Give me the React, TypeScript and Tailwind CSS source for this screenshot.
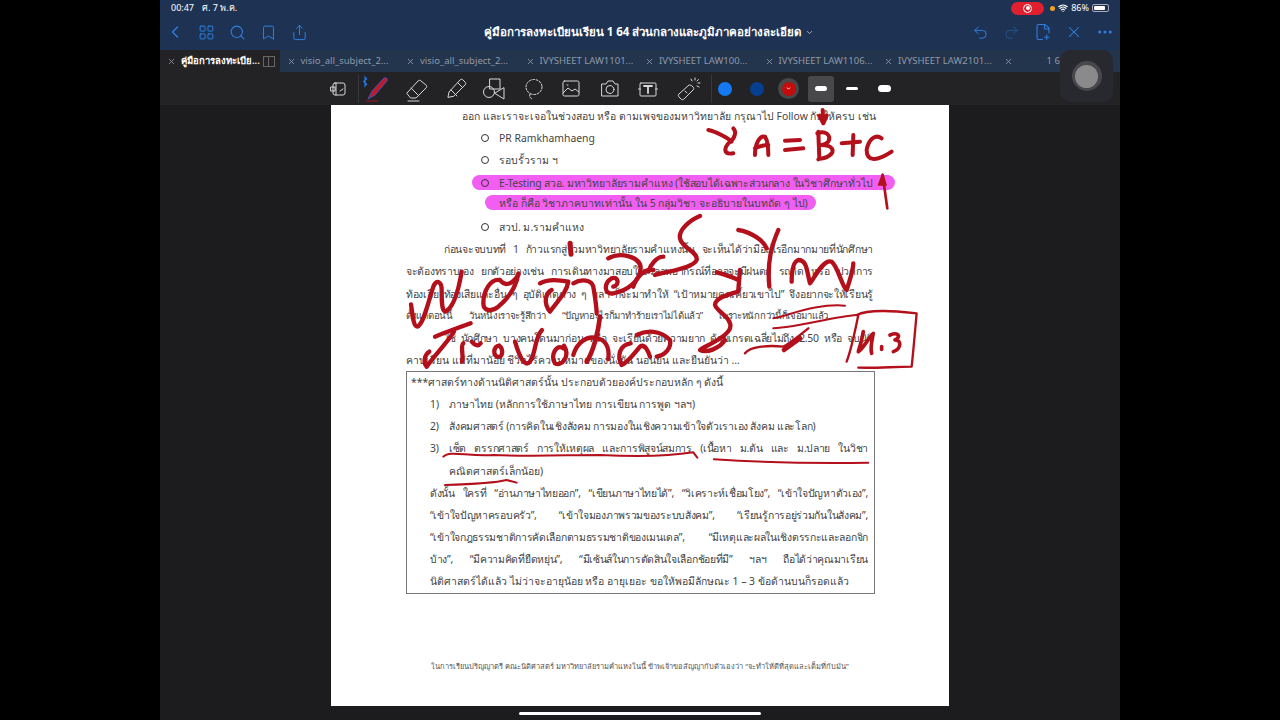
import React from "react";
import { ChevronLeft, ChevronDown, LayoutGrid, Search, Bookmark, Share, Undo2, Redo2, FilePlus2, X, Ellipsis, Wifi } from "lucide-react";

const tabs = ["คู่มือการลงทะเบีย...", "visio_all_subject_2...", "visio_all_subject_2...", "IVYSHEET LAW1101...", "IVYSHEET LAW100...", "IVYSHEET LAW1106...", "IVYSHEET LAW2101..."];

function Line({ ml = 0, w, j, className = "", children }: { ml?: number; w?: number; j?: boolean; className?: string; children: React.ReactNode }) {
  return (
    <div
      className={`h-[22.2px] leading-[22.2px] ${j ? "overflow-hidden tracking-[-0.3px] [text-align:justify] [text-align-last:justify]" : "whitespace-nowrap"} ${className}`}
      style={{ marginLeft: ml, width: w }}
    >
      {children}
    </div>
  );
}

function Num({ children }: { children: React.ReactNode }) {
  return <span className="inline-block w-[19px]">{children}</span>;
}

function Bullet({ children, hl }: { children: React.ReactNode; hl?: boolean }) {
  return (
    <div className="relative flex h-[22.2px] items-center">
      {hl && <span className="absolute left-[141px] top-[3px] h-[15px] w-[423px] rounded-full bg-[#f25ef2]" />}
      <span className="relative ml-[150px] mr-[10px] h-[8px] w-[8px] rounded-full border border-[#333]" />
      <span className={`relative whitespace-nowrap leading-[22.2px] ${hl ? "tracking-[-0.15px]" : ""}`}>{children}</span>
    </div>
  );
}

function ToolIcon({ children }: { children: React.ReactNode }) {
  return (
    <svg width={26} height={26} viewBox="0 0 26 26" fill="none" stroke="#d8d8d8" strokeWidth={1} strokeLinecap="round" strokeLinejoin="round">
      {children}
    </svg>
  );
}

function Toolbar() {
  return (
    <div className="flex h-[33px] items-center bg-[#232325] pl-[166px]">
      <div className="flex w-[26px] justify-center">
        <ToolIcon>
          <rect x="7" y="7" width="12" height="12" rx="2" />
          <path d="M10 7v12M5 11h4v4H5zM14 15l3-2" />
        </ToolIcon>
      </div>
      <div className="ml-[6px] h-[28px] w-px bg-[#38383a]" />
      <div className="ml-px w-[36px]">
        <svg width="36" height="30" viewBox="0 0 36 30" fill="none">
          <path d="M5 3l1.600 2-3 2.500 3 2.500-1.600 2V3z" fill="none" stroke="#1e78e6" strokeWidth="1.200" />
          <path d="M8 25l4-8L24 4c2-1 4 0 3 3L15 21z" fill="#c3172e" stroke="#3a55b0" strokeWidth="1" />
          <path d="M6 27h12" stroke="#a51424" strokeWidth="1" />
        </svg>
      </div>
      <div className="ml-[8px]">
        <ToolIcon>
          <path d="M3 17L14 5c1-1 2-1 3 0l5 4c1 1 1 2 0 3L12 22H7z" />
          <path d="M7 12l8 8M4 25h11" />
        </ToolIcon>
      </div>
      <div className="ml-[13px]">
        <ToolIcon>
          <path d="M5 21l1-5L17 4c1-1 2-1 3 0l2 2c1 1 1 2 0 3L11 20z" />
          <path d="M8 14l6 6M15 7l4 4" />
        </ToolIcon>
      </div>
      <div className="ml-[12px]">
        <ToolIcon>
          <rect x="9" y="3" width="10" height="10" />
          <circle cx="8" cy="16" r="5.500" />
          <path d="M23 12v11l-9-5.500z" />
        </ToolIcon>
      </div>
      <div className="ml-[13px]">
        <ToolIcon>
          <ellipse cx="14" cy="11" rx="8" ry="7.500" strokeDasharray="2 1.500" />
          <path d="M10 18c-1 2 0 4 2 5" strokeDasharray="2 1.500" />
        </ToolIcon>
      </div>
      <div className="ml-[12px]">
        <ToolIcon>
          <rect x="5" y="5" width="16" height="15" rx="1.500" />
          <path d="M5 17l5-5 4 3 3-2 4 3M9 9h1" />
        </ToolIcon>
      </div>
      <div className="ml-[13px]">
        <ToolIcon>
          <path d="M5 8h4l2-3h5l2 3h3v12H5z" />
          <circle cx="13" cy="13.500" r="4" />
        </ToolIcon>
      </div>
      <div className="ml-[12px]">
        <ToolIcon>
          <rect x="5" y="7" width="16" height="13" rx="1" />
          <path d="M9 10h8M13 10v7" strokeWidth="1.800" />
          <path d="M3.500 13h2M20.500 13h2" />
        </ToolIcon>
      </div>
      <div className="ml-[14px]">
        <ToolIcon>
          <path d="M4 18l10-9c1 0 2 0 3 1l1 1c1 1 1 2 0 3L9 23c-1 1-2 1-3 0l-2-2c-1-1-1-2 0-3z" />
          <path d="M10 15l2 2M20 2v2M25 7h-2M23.500 3.500l-1.500 1.500M16 3l1 2M24 11l-2-1" />
        </ToolIcon>
      </div>
      <div className="ml-[10px] h-[28px] w-px bg-[#38383a]" />
      <span className="ml-[6px] h-[14px] w-[14px] rounded-full bg-[#1479f2]" />
      <span className="ml-[18px] h-[14px] w-[14px] rounded-full bg-[#063f8f]" />
      <span className="ml-[14px] flex h-[21px] w-[21px] items-center justify-center rounded-full bg-[#48484a]">
        <span className="flex h-[14px] w-[14px] items-center justify-center rounded-full bg-[#c40c0c]">
          <ChevronDown size={5} strokeWidth={4} className="text-white" />
        </span>
      </span>
      <span className="ml-[9px] flex h-[26px] w-[26px] items-center justify-center rounded-[3px] bg-[#48484a]">
        <span className="h-[5px] w-[12px] rounded-full bg-white" />
      </span>
      <span className="ml-[12px] h-[3.500px] w-[12px] rounded-full bg-white" />
      <span className="ml-[20px] h-[7px] w-[13px] rounded-full bg-white" />
    </div>
  );
}

function Ink() {
  const common = { fill: "none", stroke: "#b3101c", strokeLinecap: "round" as const, strokeLinejoin: "round" as const };
  return (
    <svg className="pointer-events-none absolute left-0 top-0" width="1280" height="720" viewBox="0 0 1280 720">
      <g transform="translate(400,215) scale(0.3333)" {...common} strokeWidth="13">
        <path d="M33 268C38 300 40 335 52 335C70 330 85 260 100 215C110 190 125 200 125 225C125 260 125 285 135 290C160 280 175 230 185 170" />
        <path d="M300 195C270 190 250 230 250 265C250 290 275 290 295 275C330 245 350 210 355 175M300 195C315 215 335 210 355 180" />
        <path d="M420 205C445 190 480 195 505 200C500 235 470 260 450 290C430 265 435 235 455 225" />
        <path d="M520 205C545 190 575 195 580 215C585 245 590 275 590 295" />
        <path d="M510 85L513 118" strokeWidth="15" />
        <path d="M625 130C660 110 722 125 722 160C720 200 680 228 640 235C612 240 610 205 635 190C655 182 660 210 640 215" />
        <path d="M700 215C710 185 735 160 760 165" />
        <path d="M105 365C130 355 170 340 212 325" />
        <path d="M162 350C140 385 105 420 80 455C70 445 72 420 88 410" />
        <path d="M190 385C180 395 192 420 186 440M215 380C225 392 235 395 242 385" />
        <path d="M298 392C280 390 275 430 300 425C310 418 308 400 298 392" />
        <path d="M345 380C360 430 375 458 390 440C410 410 402 370 426 345" />
        <path d="M490 400C470 385 450 420 465 445C485 455 512 425 492 392" />
        <path d="M600 305C595 350 580 410 560 440" strokeWidth="14" />
        <path d="M520 420C530 385 560 360 590 370C612 372 630 392 625 432" />
        <path d="M692 385C660 390 650 420 665 450C680 445 700 420 720 395C735 385 745 410 750 425" />
      </g>
      <g transform="translate(650,215) scale(0.3333)" {...common} strokeWidth="13">
        <path d="M150 3C120 15 85 45 90 70C95 100 145 110 140 135C130 160 50 170 15 180" />
        <path d="M40 125C20 125 0 150 -5 170" />
        <path d="M200 172C230 180 255 190 265 195M270 165L265 225" />
        <path d="M265 45C300 50 340 75 350 100M385 45C370 80 350 130 358 215" />
        <path d="M425 200C425 165 430 140 445 135C470 135 470 165 480 205C490 195 520 130 545 140C565 155 575 215 590 225C600 195 610 165 610 145" />
        <path d="M265 230C230 240 195 250 195 270C200 290 250 310 240 340C230 370 150 400 150 405C170 415 210 400 225 375" />
        <path d="M60 375C30 345 -10 345 -40 360M60 375C65 400 45 420 20 425" />
        <path d="M370 310C420 300 500 265 585 272" strokeWidth="6" />
        <path d="M370 340C450 335 550 305 620 300" strokeWidth="6" />
        <path d="M285 415C300 395 350 390 400 395C420 385 450 360 475 340" strokeWidth="7" />
        <path d="M402 405L450 370" strokeWidth="14" />
        <path d="M620 300C660 280 750 290 800 295C795 350 790 410 785 455C730 455 680 460 625 458" strokeWidth="7" />
        <path d="M625 300C615 350 605 400 590 440" strokeWidth="7" />
        <path d="M640 350C635 380 625 410 625 410C640 400 655 370 670 355C665 380 660 400 665 415" strokeWidth="11" />
        <path d="M695 395L695 403" strokeWidth="11" />
        <path d="M720 360C745 350 755 365 735 375C755 375 755 400 730 410" strokeWidth="11" />
      </g>
      <g transform="translate(700,100) scale(0.3333)" {...common} strokeWidth="12">
        <path d="M25 90C50 95 85 115 95 125M100 85C110 95 105 115 90 125C70 145 70 165 100 160" />
        <path d="M165 165C165 130 180 105 195 110C205 125 205 150 205 165M165 145C175 140 195 135 205 135" />
        <path d="M255 122L300 120M255 150L310 145" />
        <path d="M355 95L358 175M352 100C375 90 395 105 385 125C375 135 370 135 365 135C400 135 405 155 390 165C380 175 365 175 355 178" />
        <path d="M368 30L370 70M358 47L370 70L380 47" />
        <path d="M425 130L480 125M460 105L458 165" />
        <path d="M545 115C525 100 505 120 500 150C500 185 530 185 575 155" />
        <path d="M562 325L548 225" strokeWidth="8" />
        <path d="M536 255L548 222L558 255Z" fill="#b3101c" strokeWidth="5" />
      </g>
      <g transform="translate(400,365) scale(0.3333)" {...common} strokeWidth="6">
        <path d="M130 275C150 255 200 275 280 270C400 275 500 270 600 270C700 275 800 275 880 262L892 278" />
        <path d="M942 283C1050 290 1250 295 1405 293" />
        <path d="M135 360C200 358 280 355 320 345L350 353" />
      </g>
    </svg>
  );
}

export default function App() {
  return (
    <div className="h-screen w-full overflow-hidden bg-black" style={{ fontFamily: '"Noto Sans","Liberation Sans",sans-serif' }}>
      <div className="relative mx-auto flex h-[720px] w-[960px] flex-col">
        <header className="h-[50px] bg-[#1e3354] text-white">
          <div className="flex h-[16px] items-center pl-[11px] pr-[11px] text-[9px]">
            <span>00:47</span>
            <span className="ml-[8px]">ศ. 7 พ.ค.</span>
            <span className="ml-auto flex h-[13px] w-[33px] items-center justify-center rounded-full bg-[#e0202f]">
              <span className="flex h-[9px] w-[9px] items-center justify-center rounded-full border border-white">
                <span className="h-[4px] w-[4px] rounded-full bg-white" />
              </span>
            </span>
            <span className="ml-[6px] h-[5px] w-[5px] rounded-full bg-[#f2a21e]" />
            <Wifi size={10} strokeWidth={3} className="ml-[3px]" />
            <span className="ml-[3px]">86%</span>
            <span className="ml-[3px] flex h-[8px] w-[17px] items-center rounded-[2px] border border-[#aab] p-px">
              <span className="h-full w-[85%] rounded-[1px] bg-white" />
            </span>
          </div>
          <div className="relative flex h-[32px] items-center text-[#2f7fe0]">
            <ChevronLeft size={20} strokeWidth={1.6} className="ml-[5px]" />
            <LayoutGrid size={17} strokeWidth={1.4} className="ml-[13px]" />
            <Search size={17} strokeWidth={1.5} className="ml-[14px]" />
            <Bookmark size={17} strokeWidth={1.4} className="ml-[14px]" />
            <Share size={17} strokeWidth={1.4} className="ml-[14px]" />
            <span className="flex flex-1 items-center justify-center gap-[4px] pl-[18px] text-[11.500px] font-bold text-white">
              คู่มือการลงทะเบียนเรียน 1 64 ส่วนกลางและภูมิภาคอย่างละเอียด
              <ChevronDown size={9} className="text-[#ccc]" />
            </span>
            <Undo2 size={17} strokeWidth={1.4} className="mr-[14px]" />
            <Redo2 size={17} strokeWidth={1.4} className="mr-[14px] text-[#24538f]" />
            <FilePlus2 size={18} strokeWidth={1.4} className="mr-[13px]" />
            <X size={18} strokeWidth={1.4} className="mr-[13px]" />
            <Ellipsis size={18} strokeWidth={2} className="mr-[6px]" />
          </div>
        </header>

        <div className="flex h-[22px] bg-[#23344d] text-[9.500px] text-[#8f9aa8]">
          {tabs.map((t, i) => (
            <div key={i} className={`relative flex h-[22px] w-[119.500px] items-center pl-[7px] ${i === 0 ? "bg-[#232325] font-semibold text-white" : ""}`}>
              <X size={9} className="mr-[5px] shrink-0 text-[#9aa3ad]" />
              <span className="whitespace-nowrap">{t}</span>
              {i === 0 && (
                <span className="absolute left-[103px] flex h-[11px] w-[12px] border border-[#666]">
                  <span className="h-full w-1/2 border-r border-[#666]" />
                </span>
              )}
            </div>
          ))}
          <div className="flex flex-1 items-center pl-[7px]">
            <X size={9} className="text-[#9aa3ad]" />
            <span className="ml-[34px]">1 64</span>
          </div>
        </div>

        <Toolbar />

        <main className="flex-1 bg-[#1c1c1e]">
          <article className="mx-auto h-[601px] w-[618px] bg-white text-[10.400px] text-[#444]">
            <Line ml={131} w={411}>ออก และเราจะเจอในช่วงสอบ หรือ ตามเพจของมหาวิทยาลัย กรุณาไป Follow กันให้ครบ เช่น</Line>
            <Bullet>PR Ramkhamhaeng</Bullet>
            <Bullet>รอบรั้วราม ฯ</Bullet>
            <Bullet hl>E-Testing สวอ. มหาวิทยาลัยรามคำแหง (ใช้สอบได้เฉพาะส่วนกลาง ในวิชาศึกษาทั่วไป</Bullet>
            <div className="relative h-[22.200px]">
              <span className="absolute left-[154px] top-[1px] h-[15px] w-[331px] rounded-full bg-[#f25ef2]" />
              <span className="absolute left-[168px] whitespace-nowrap leading-[19px]">หรือ ก็คือ วิชาภาคบาทเท่านั้น ใน 5 กลุ่มวิชา จะอธิบายในบทถัด ๆ ไป)</span>
            </div>
            <Bullet>สวป. ม.รามคำแหง</Bullet>
            <Line ml={113} w={429} j>ก่อนจะจบบทที่ 1 ก้าวแรกสู่รั้วมหาวิทยาลัยรามคำแหงนั้น จะเห็นได้ว่ามีอะไรอีกมากมายที่นักศึกษา</Line>
            <Line ml={75} w={467} j>จะต้องทราบเอง ยกตัวอย่างเช่น การเดินทางมาสอบในเวลาพยากรณ์ที่อาจจะมีฝนตก รถติด หรือ ปวดการ</Line>
            <Line ml={75} w={467} j>ท้องเสีย ท้องเสียและอื่น ๆ อุบัติเหตุต่าง ๆ ฯลฯ ก็จะมาทำให้ “เป้าหมายคดเคี้ยวเขาไป” จึงอยากจะให้เรียนรู้</Line>
            <Line ml={75} w={422} j className="text-[9.600px]">ตั้งแต่ตอนนี้ วันหนึ่งเราจะรู้สึกว่า “ปัญหาอะไรก็มาทำร้ายเราไม่ได้แล้ว” เพราะหนักกว่านี้ก็เจอมาแล้ว</Line>
            <Line ml={113} w={429} j>ใช่ นักศึกษา บางคนโดนมาก่อน หรือ จะเรียนด้วยความยาก ด้วยเกรดเฉลี่ยไม่ถึง 2.50 หรือ จบนิติ</Line>
            <Line ml={75} w={294}>คาบเรียน แม้ที่มาน้อย ชีวิตไร้ความหมายของนั่งยัน นอนยัน และยืนยันว่า ...</Line>
            <div className="ml-[75px] h-[223px] w-[469px] border border-[#777]">
              <div className="-mt-[1.500px]">
                <Line ml={4}>***ศาสตร์ทางด้านนิติศาสตร์นั้น ประกอบด้วยองค์ประกอบหลัก ๆ ดังนี้</Line>
                <Line ml={23}><Num>1)</Num>ภาษาไทย (หลักการใช้ภาษาไทย การเขียน การพูด ฯลฯ)</Line>
                <Line ml={23} className="tracking-[-0.25px]"><Num>2)</Num>สังคมศาสตร์ (การคิดในเชิงสังคม การมองในเชิงความเข้าใจตัวเราเอง สังคม และโลก)</Line>
                <Line ml={23} w={438} j><Num>3)</Num>เซ็ต ตรรกศาสตร์ การให้เหตุผล และการพิสูจน์สมการ (เนื้อหา ม.ต้น และ ม.ปลาย ในวิชา</Line>
                <Line ml={42}>คณิตศาสตร์เล็กน้อย)</Line>
                <Line ml={23} w={438} j>ดังนั้น ใครที่ “อ่านภาษาไทยออก”, “เขียนภาษาไทยได้”, “วิเคราะห์เชื่อมโยง”, “เข้าใจปัญหาตัวเอง”,</Line>
                <Line ml={23} w={438} j>“เข้าใจปัญหาครอบครัว”, “เข้าใจมองภาพรวมของระบบสังคม”, “เรียนรู้การอยู่ร่วมกันในสังคม”,</Line>
                <Line ml={23} w={438} j>“เข้าใจกฎธรรมชาติการคัดเลือกตามธรรมชาติของเมนเดล”, “มีเหตุและผลในเชิงตรรกะและลอกจิก</Line>
                <Line ml={23} w={438} j>บ้าง”, “มีความคิดที่ยืดหยุ่น”, “มีเซ้นส์ในการตัดสินใจเลือกช้อยที่มี” ฯลฯ ถือได้ว่าคุณมาเรียน</Line>
                <Line ml={23}>นิติศาสตร์ได้แล้ว ไม่ว่าจะอายุน้อย หรือ อายุเยอะ ขอให้พอมีลักษณะ 1 – 3 ข้อด้านบนก็รอดแล้ว</Line>
              </div>
            </div>
            <p className="mt-[67px] text-center text-[7.500px] text-[#555]">
              ในการเรียนปริญญาตรี คณะนิติศาสตร์ มหาวิทยาลัยรามคำแหงในนี้ ข้าพเจ้าขอสัญญากับตัวเองว่า “จะทำให้ดีที่สุดและเต็มที่กับมัน”
            </p>
          </article>
          <div className="mx-auto mt-[6px] h-[3px] w-[242px] rounded-full bg-white" />
        </main>

        <div className="absolute left-[900px] top-[50px] flex h-[52px] w-[53px] items-center justify-center rounded-[10px] bg-[#27292f]">
          <span className="flex h-[30px] w-[30px] items-center justify-center rounded-full bg-[#48484c]">
            <span className="h-[23px] w-[23px] rounded-full bg-[#8a8a8c]" />
          </span>
        </div>
        <div className="pointer-events-none absolute -left-[160px] top-0 h-[720px] w-[1280px]">
          <Ink />
        </div>
      </div>
    </div>
  );
}
